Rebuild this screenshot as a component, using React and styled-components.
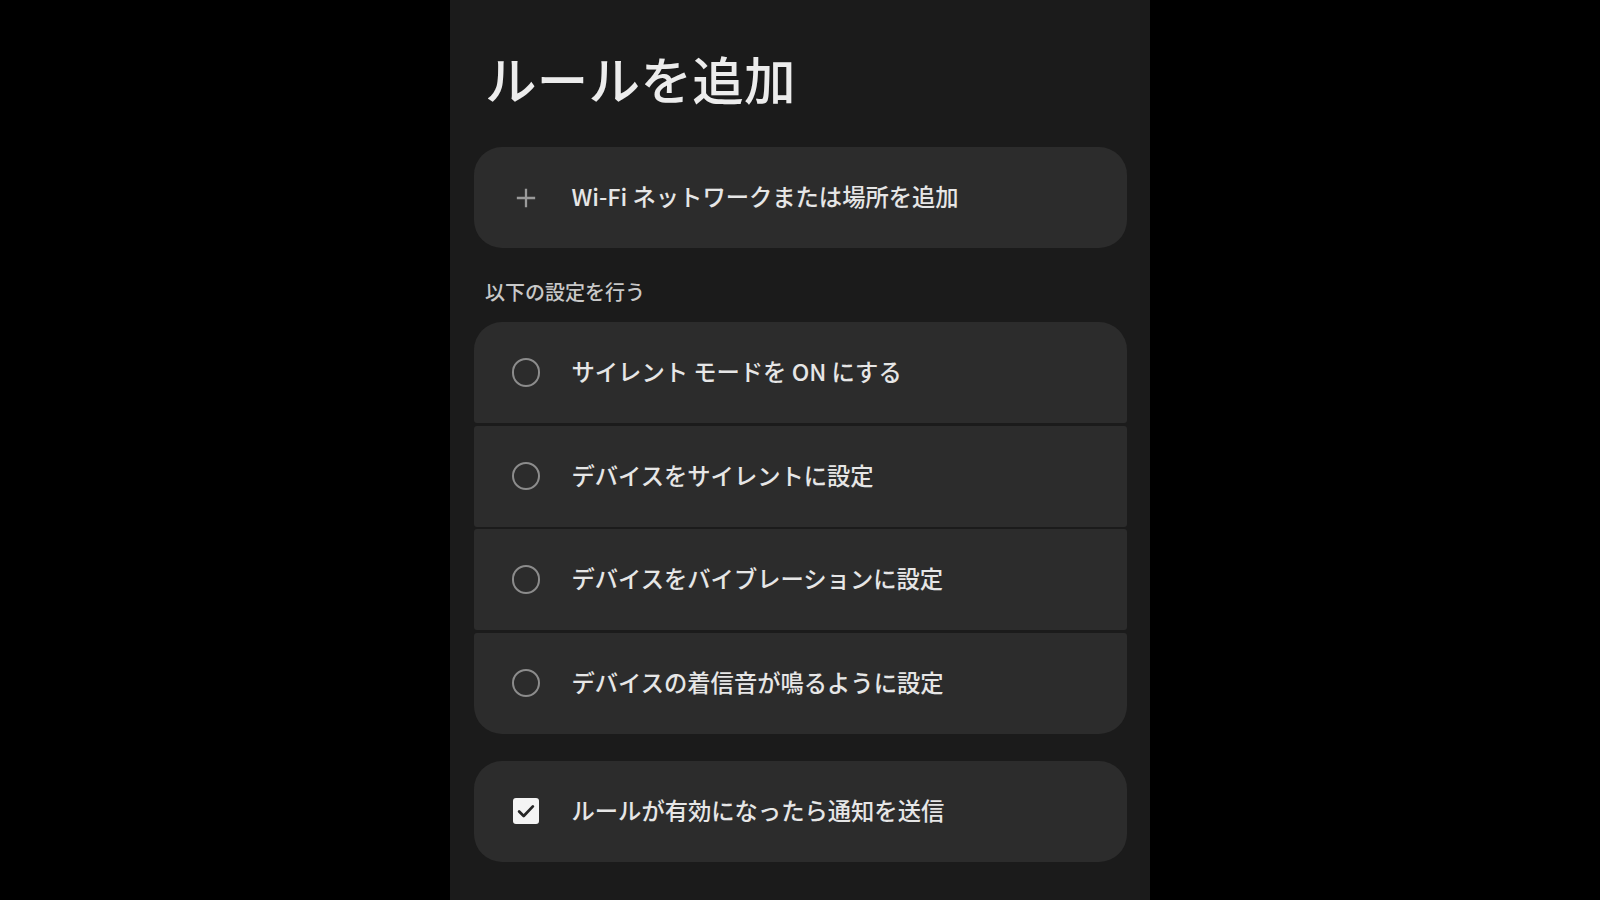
import React from "react";
import styled, { createGlobalStyle } from "styled-components";

const GlobalStyle = createGlobalStyle`
    html, body {
        margin: 0;
        padding: 0;
        background: #000;
        height: 100%;
    }
    body {
        font-family: "Noto Sans CJK JP", "Noto Sans", sans-serif;
        color: #e8e8e8;
    }
`;

const options = [
    "サイレント モードを ON にする",
    "デバイスをサイレントに設定",
    "デバイスをバイブレーションに設定",
    "デバイスの着信音が鳴るように設定",
];

const App = () => {
    return (
        <>
            <GlobalStyle />
            <Screen>
                <Panel>
                    <Title>ルールを追加</Title>
                    <Card>
                        <IconSlot>
                            <PlusIcon viewBox="0 0 24 24">
                                <path d="M12 2v20M2 12h20" />
                            </PlusIcon>
                        </IconSlot>
                        <Label>Wi-Fi ネットワークまたは場所を追加</Label>
                    </Card>
                    <SectionLabel>以下の設定を行う</SectionLabel>
                    <Group>
                        {options.map((text, index) => (
                            <GroupItem
                                key={text}
                                $first={index === 0}
                                $last={index === options.length - 1}
                            >
                                <IconSlot>
                                    <Radio />
                                </IconSlot>
                                <Label>{text}</Label>
                            </GroupItem>
                        ))}
                    </Group>
                    <Card $spaced>
                        <IconSlot>
                            <Checkbox>
                                <svg viewBox="0 0 24 24" width="22" height="22">
                                    <path
                                        d="M4.5 12.5l5 5L19.5 7"
                                        fill="none"
                                        stroke="#262626"
                                        strokeWidth="3"
                                        strokeLinecap="round"
                                        strokeLinejoin="round"
                                    />
                                </svg>
                            </Checkbox>
                        </IconSlot>
                        <Label>ルールが有効になったら通知を送信</Label>
                    </Card>
                </Panel>
            </Screen>
        </>
    );
};

const Screen = styled.div`
    display: flex;
    justify-content: center;
    min-height: 100vh;
    background: #000;
`;

const Panel = styled.main`
    width: 700px;
    min-height: 900px;
    box-sizing: border-box;
    padding: 0 23.5px;
    background: #1b1b1b;
    display: flex;
    flex-direction: column;
`;

const Title = styled.h1`
    margin: 44px 0 35px 11.5px;
    font-size: 51.5px;
    line-height: 68px;
    font-weight: 500;
    color: #ececec;
    letter-spacing: 0.3px;
`;

const Card = styled.div`
    height: 101px;
    margin-top: ${(p) => (p.$spaced ? "27px" : "0")};
    border-radius: 28px;
    background: #2c2c2c;
    display: flex;
    align-items: center;
`;

const IconSlot = styled.div`
    width: 98px;
    display: flex;
    align-items: center;
    justify-content: flex-start;
    padding-left: 38px;
    box-sizing: border-box;
    flex-shrink: 0;
`;

const PlusIcon = styled.svg`
    width: 22px;
    height: 22px;
    margin-left: 3px;
    fill: none;
    stroke: #9a9a9a;
    stroke-width: 2.5;
`;

const Label = styled.span`
    font-size: 23.3px;
    line-height: 32px;
    color: #e6e6e6;
    font-weight: 500;
    white-space: nowrap;
    margin-top: -3px;
`;

const SectionLabel = styled.div`
    margin: 30px 0 16px 11.5px;
    font-size: 20px;
    line-height: 28px;
    font-weight: 500;
    color: #c8c8c8;
`;

const Group = styled.div`
    display: flex;
    flex-direction: column;
    gap: 2.5px;
`;

const GroupItem = styled.div`
    height: 101px;
    background: #2c2c2c;
    display: flex;
    align-items: center;
    border-radius: ${(p) =>
        p.$first ? "28px 28px 3px 3px" : p.$last ? "3px 3px 28px 28px" : "3px"};
`;

const Radio = styled.span`
    display: block;
    box-sizing: border-box;
    width: 28.5px;
    height: 28.5px;
    border-radius: 50%;
    border: 2.8px solid #8c8c8c;
`;

const Checkbox = styled.span`
    width: 26px;
    height: 26px;
    margin-left: 1px;
    border-radius: 3px;
    background: #f4f4f4;
    display: flex;
    align-items: center;
    justify-content: center;
`;

export default App;
